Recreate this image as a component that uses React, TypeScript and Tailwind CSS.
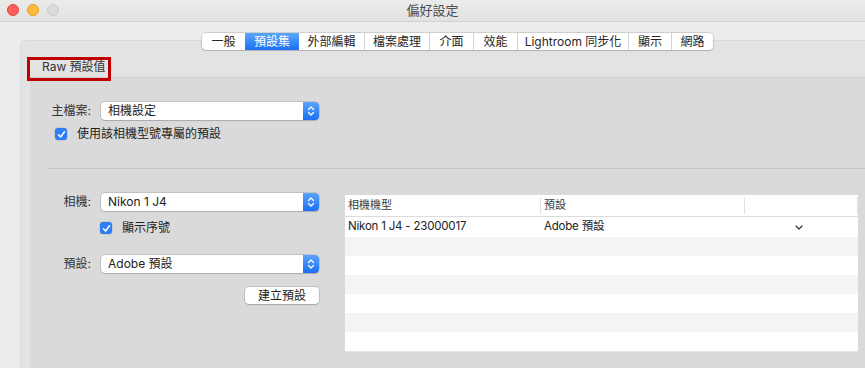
import React from 'react';

const tabs = [
  { label: '一般', w: 'w-[43px]' },
  { label: '預設集', w: 'w-[54px]', active: true },
  { label: '外部編輯', w: 'w-[65px]' },
  { label: '檔案處理', w: 'w-[65px]' },
  { label: '介面', w: 'w-[44px]' },
  { label: '效能', w: 'w-[44px]' },
  { label: 'Lightroom 同步化', w: 'w-[111px]' },
  { label: '顯示', w: 'w-[43px]' },
  { label: '網路', w: 'w-[42px]' },
];

function Stepper() {
  return (
    <div className="flex h-full w-[16px] items-center justify-center rounded-r-[4px] bg-gradient-to-b from-[#5aa2fa] to-[#1a6ff2]">
      <svg width="8" height="12" viewBox="0 0 8 12" fill="none" stroke="white" strokeWidth="1.3" strokeLinecap="round" strokeLinejoin="round">
        <path d="M1.5 4.5 L4 2 L6.5 4.5" />
        <path d="M1.5 7.5 L4 10 L6.5 7.5" />
      </svg>
    </div>
  );
}

function Select({ value }: { value: string }) {
  return (
    <div className="flex h-[18px] w-[218px] shrink-0 items-center rounded-[4px] bg-white shadow-[0_0_0_0.5px_rgba(0,0,0,0.22),0_1px_1px_rgba(0,0,0,0.12)]">
      <span className="flex-1 pl-[7px] text-[12px] leading-none text-[#222]">{value}</span>
      <Stepper />
    </div>
  );
}

function Checkbox({ label }: { label: string }) {
  return (
    <div className="flex items-center gap-[10px]">
      <div className="flex h-[12px] w-[12px] shrink-0 items-center justify-center rounded-[3px] bg-[#2f7df6] shadow-[0_0_0_0.5px_rgba(0,0,0,0.15)]">
        <svg width="9" height="9" viewBox="0 0 9 9" fill="none" stroke="white" strokeWidth="1.5" strokeLinecap="round" strokeLinejoin="round">
          <path d="M1.5 4.8 L3.6 7 L7.5 1.8" />
        </svg>
      </div>
      <span className="whitespace-nowrap text-[12px] leading-none text-[#222]">{label}</span>
    </div>
  );
}

function Label({ text }: { text: string }) {
  return (
    <span className="w-[54px] shrink-0 whitespace-nowrap pr-[10px] text-right text-[12px] leading-none text-[#333]">
      {text}
    </span>
  );
}

export default function App() {
  const rows = [0, 1, 2, 3, 4, 5];
  return (
    <div
      className="h-[368px] w-[865px] overflow-hidden bg-[#ececec]"
      style={{ fontFamily: 'Inter, "Noto Sans CJK TC", sans-serif' }}
    >
      {/* Title bar */}
      <div className="relative flex h-[22px] items-center justify-center border-b border-[#d2d2d2] bg-gradient-to-b from-[#ebebeb] to-[#e2e2e2]">
        <div className="absolute left-[7px] top-[4px] flex gap-[8px]">
          <span className="h-[12px] w-[12px] rounded-full border border-[#e2463f] bg-[#fc605c]" />
          <span className="h-[12px] w-[12px] rounded-full border border-[#e1a116] bg-[#fdbc40]" />
          <span className="h-[12px] w-[12px] rounded-full border border-[#cdcdcd] bg-[#dadada]" />
        </div>
        <span className="text-[13px] text-[#4d4d4d]">偏好設定</span>
      </div>

      {/* Tab strip */}
      <div className="relative z-10 ml-[202px] mt-[11px] flex h-[17px] w-fit overflow-hidden rounded-[4px] bg-white shadow-[0_0_0_0.5px_rgba(0,0,0,0.25),0_1px_1px_rgba(0,0,0,0.1)]">
        {tabs.map((t, i) => (
          <div
            key={t.label}
            className={`${t.w} flex items-center justify-center whitespace-nowrap text-[12px] leading-none ${
              t.active
                ? 'bg-gradient-to-b from-[#5aa5fb] to-[#1a70f3] text-white'
                : 'text-[#262626]'
            } ${i > 0 && !t.active && !tabs[i - 1].active ? 'border-l border-[#d4d4d4]' : ''}`}
          >
            {t.label}
          </div>
        ))}
      </div>

      {/* Tab box */}
      <div className="-mt-[10px] ml-[20px] h-[400px] rounded-tl-[6px] border-l border-t border-[#d9d9d9] bg-[#e3e3e3] pl-[9px] pt-[16px]">
        <div className="relative ml-[12px] flex h-[20px] items-center">
          <span className="text-[12px] leading-none text-[#333]">Raw 預設值</span>
          <div className="absolute -left-[15px] top-0 h-[24px] w-[84px] border-[3px] border-[#c00000]" />
        </div>

        {/* Group */}
        <div className="h-[300px] border-t border-[#cdcdcd] bg-[#dadada] pt-[24px]">
          <div className="ml-[17px] flex items-center">
            <Label text="主檔案:" />
            <Select value="相機設定" />
          </div>
          <div className="ml-[25px] mt-[8px]">
            <Checkbox label="使用該相機型號專屬的預設" />
          </div>

          <div className="ml-[17px] mt-[28px] h-px bg-[#c6c6c6]" />

          <div className="mt-[24px] flex">
            <div className="ml-[17px] flex w-[272px] shrink-0 flex-col">
              <div className="flex items-center">
                <Label text="相機:" />
                <Select value="Nikon 1 J4" />
              </div>
              <div className="ml-[53px] mt-[11px]">
                <Checkbox label="顯示序號" />
              </div>
              <div className="mt-[21px] flex items-center">
                <Label text="預設:" />
                <Select value="Adobe 預設" />
              </div>
              <div className="mt-[14px] flex justify-end">
                <div className="flex h-[17px] w-[74px] items-center justify-center rounded-[4px] bg-white text-[12px] leading-none text-[#222] shadow-[0_0_0_0.5px_rgba(0,0,0,0.25),0_1px_1px_rgba(0,0,0,0.12)]">
                  建立預設
                </div>
              </div>
            </div>

            {/* Table */}
            <div className="ml-[26px] mt-[2px] w-[513px] shrink-0 border-b border-[#e6e6e6] bg-white">
              <div className="flex h-[22px] items-center border-b border-[#dcdcdc] text-[11px] leading-none text-[#3a3a3a]">
                <div className="w-[195px] pl-[3px]">相機機型</div>
                <div className="h-[17px] w-px bg-[#e2e2e2]" />
                <div className="w-[203px] pl-[3px]">預設</div>
                <div className="h-[17px] w-px bg-[#e2e2e2]" />
                <div className="flex-1" />
                <div className="h-[17px] w-px bg-[#e2e2e2]" />
              </div>
              <div className="flex h-[20px] items-center text-[11.5px] leading-none tracking-[-0.2px] text-[#222]">
                <div className="w-[196px] pl-[3px]">Nikon 1 J4 - 23000017</div>
                <div className="w-[254px] pl-[3px]">Adobe 預設</div>
                <svg width="8" height="5" viewBox="0 0 8 5" fill="none" stroke="#333" strokeWidth="1.2" strokeLinecap="round" strokeLinejoin="round">
                  <path d="M1 1 L4 4 L7 1" />
                </svg>
              </div>
              {rows.map((r) => (
                <div key={r} className={`h-[19px] ${r % 2 === 0 ? 'bg-[#f3f4f4]' : 'bg-white'}`} />
              ))}
            </div>
          </div>
        </div>
      </div>
    </div>
  );
}
